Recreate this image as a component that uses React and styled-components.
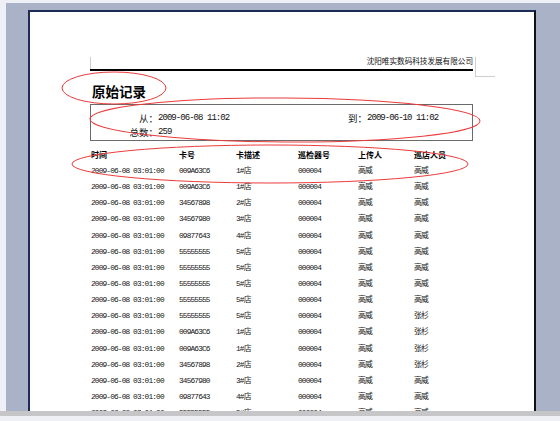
import React from "react";
import styled, { createGlobalStyle } from "styled-components";

const GlobalStyle = createGlobalStyle`
  html, body { margin: 0; padding: 0; background: #f2f3f7; }
  body { font-family: "Noto Sans CJK SC", sans-serif; }
`;

const Screen = styled.div`
  position: relative;
  width: 560px;
  height: 421px;
  overflow: hidden;
  display: flex;
  flex-direction: column;
  background: #eef0f5;
`;

const Desk = styled.div`
  flex: none;
  height: 408px;
  margin: 3px 0 0 6px;
  padding: 7px 24px 0 22px;
  box-sizing: border-box;
  display: flex;
  background: #aab2c7;
`;

const ScrollBar = styled.div`
  flex: none;
  height: 5px;
  background: #c6c6c8;
`;

const Page = styled.div`
  position: relative;
  flex: 1;
  background: #fff;
  border-left: 2px solid #1c2b58;
  border-top: 2px solid #1c2b58;
  border-right: 2px solid #121212;
  padding: 44px 61px 0 60px;
  overflow: hidden;
`;

const Header = styled.div`
  display: flex;
  justify-content: flex-end;
  border-bottom: 2px solid #000;
  padding-bottom: 3px;
`;

const Company = styled.span`
  font-size: 7.6px;
  line-height: 10px;
  color: #111;
`;

const Mark = styled.span`
  position: absolute;
  background: #cfcfcf;
  left: ${(p) => p.$x}px;
  top: ${(p) => p.$y}px;
  width: ${(p) => p.$w}px;
  height: ${(p) => p.$h}px;
`;

const Title = styled.h1`
  margin: 12px 0 0;
  padding-left: 2px;
  font-size: 13.5px;
  line-height: 16px;
  font-weight: 700;
  color: #000;
`;

const InfoBox = styled.div`
  margin-top: 5px;
  border: 1px solid #6a6a6a;
  padding: 6px 0 1px;
  display: grid;
  grid-template-columns: 67px 189px 20px 1fr;
  grid-auto-rows: 14px;
  align-items: center;
`;

const Label = styled.span`
  text-align: right;
  font-size: 9.5px;
  line-height: 14px;
  color: #111;
  white-space: nowrap;
`;

const Value = styled.span`
  font-family: "Liberation Mono", "Noto Sans CJK SC", monospace;
  font-size: 9px;
  letter-spacing: -0.95px;
  line-height: 14px;
  color: #111;
  white-space: nowrap;
`;

const Table = styled.div`
  margin-top: 6px;
  padding-left: 1px;
`;

const Row = styled.div`
  display: grid;
  grid-template-columns: 88px 57px 62px 60px 56px 1fr;
  align-items: center;
  height: ${(p) => (p.$head ? "16px" : "16.15px")};
`;

const HeadCell = styled.span`
  font-size: 8px;
  font-weight: 700;
  color: #000;
  white-space: nowrap;
  line-height: 16px;
`;

const Cell = styled.span`
  font-family: "Liberation Mono", "Noto Sans CJK SC", monospace;
  font-size: 7.8px;
  letter-spacing: -0.85px;
  color: #151515;
  white-space: nowrap;
  line-height: 16px;
`;

const Overlay = styled.svg`
  position: absolute;
  left: 0;
  top: 0;
  pointer-events: none;
`;

const cards = [
  ["009A63C6", "1#店"],
  ["009A63C6", "1#店"],
  ["34567898", "2#店"],
  ["34567980", "3#店"],
  ["09877643", "4#店"],
  ["55555555", "5#店"],
  ["55555555", "5#店"],
  ["55555555", "5#店"],
  ["55555555", "5#店"],
  ["55555555", "5#店"],
  ["009A63C6", "1#店"],
  ["009A63C6", "1#店"],
  ["34567898", "2#店"],
  ["34567980", "3#店"],
  ["09877643", "4#店"],
  ["55555555", "5#店"],
];

const rows = cards.map(([card, desc], i) => ({
  time: "2009-06-08 03:01:00",
  card,
  desc,
  device: "000004",
  uploader: "高威",
  patrol: i >= 9 && i <= 12 ? "张杉" : "高威",
}));

export default function App() {
  return (
    <>
      <GlobalStyle />
      <Screen>
        <Desk>
          <Page>
            <Mark $x={60} $y={45} $w={1} $h={12} />
            <Mark $x={445} $y={45} $w={1} $h={19} />
            <Mark $x={445} $y={64} $w={20} $h={1} />
            <Header>
              <Company>沈阳唯实数码科技发展有限公司</Company>
            </Header>
            <Title>原始记录</Title>
            <InfoBox>
              <Label>从：</Label>
              <Value>2009-06-08 11:02</Value>
              <Label>到：</Label>
              <Value>2009-06-10 11:02</Value>
              <Label>总数：</Label>
              <Value>259</Value>
            </InfoBox>
            <Table>
              <Row $head>
                <HeadCell>时间</HeadCell>
                <HeadCell>卡号</HeadCell>
                <HeadCell>卡描述</HeadCell>
                <HeadCell>巡检器号</HeadCell>
                <HeadCell>上传人</HeadCell>
                <HeadCell>巡店人员</HeadCell>
              </Row>
              {rows.map((r, i) => (
                <Row key={i}>
                  <Cell>{r.time}</Cell>
                  <Cell>{r.card}</Cell>
                  <Cell>{r.desc}</Cell>
                  <Cell>{r.device}</Cell>
                  <Cell>{r.uploader}</Cell>
                  <Cell>{r.patrol}</Cell>
                </Row>
              ))}
            </Table>
          </Page>
        </Desk>
        <ScrollBar />
        <Overlay width="560" height="421" viewBox="0 0 560 421">
          <g fill="none" stroke="#ec3b3b" strokeWidth="1">
            <ellipse cx="114" cy="88" rx="52" ry="16" />
            <ellipse cx="285" cy="120" rx="195" ry="22" transform="rotate(0.3 285 120)" />
            <ellipse cx="270" cy="164" rx="198" ry="19" />
          </g>
        </Overlay>
      </Screen>
    </>
  );
}
